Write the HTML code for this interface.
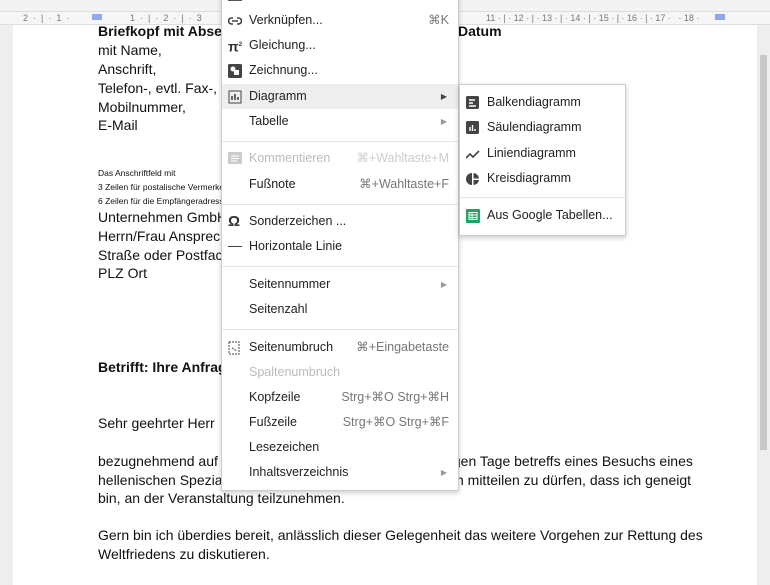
<!DOCTYPE html>
<html><head><meta charset="utf-8"><style>
*{margin:0;padding:0;box-sizing:border-box}
body{width:770px;height:578px;overflow:hidden;background:#eeeeee;font-family:"Liberation Sans",sans-serif;position:relative}
.a{position:absolute;white-space:nowrap}
.page{position:absolute;left:13px;top:25px;width:744px;height:560px;background:#fff}
.ruler{position:absolute;left:0;top:12px;width:770px;height:13px;background:#f6f6f6;border-bottom:1px solid #ddd;font-size:9px;color:#777}
.d{font-size:14px;color:#111;line-height:19px}
.s{font-size:8.5px;color:#111}
.menu{position:absolute;left:221px;top:-8px;width:238px;height:499px;background:#fff;border:1px solid #ccc;box-shadow:0 2px 5px rgba(0,0,0,.2)}
.mi{position:absolute;left:0;width:236px;height:25px;font-size:12.5px;color:#222;line-height:25px;white-space:nowrap}
.mi .t{position:absolute;left:27px;top:0px}
.mi .k{position:absolute;right:9px;top:0px;color:#777}
.mi .ar{position:absolute;right:11px;font-size:8px;color:#999}
.dis{color:#bbb!important}
.dis .k{color:#ccc}
.sep{position:absolute;left:0;width:236px;height:1px;background:#e5e5e5}
.ic{position:absolute;left:6px;top:6px;width:14px;height:14px}
.sub{position:absolute;left:459px;top:84px;width:167px;height:152px;background:#fff;border:1px solid #ccc;box-shadow:0 2px 5px rgba(0,0,0,.2)}
.si{position:absolute;left:0;width:165px;height:25px;line-height:25px;font-size:12.5px;color:#222;white-space:nowrap}
.si .t{position:absolute;left:27px;top:0px}
</style></head><body>
<div style="position:absolute;left:0;top:0;width:770px;height:12px;background:#f3f3f3;border-bottom:1px solid #ddd"></div>
<div class="ruler">
<span class="a" style="left:23px;top:1px">2 &nbsp;·&nbsp; | &nbsp;·&nbsp; 1 &nbsp;·</span>
<div class="a" style="left:92px;top:2px;width:10px;height:6px;background:#8fa8f0"></div>
<span class="a" style="left:130px;top:1px">1 &nbsp;·&nbsp; | &nbsp;·&nbsp; 2 &nbsp;·&nbsp; | &nbsp;·&nbsp; 3</span>
<span class="a" style="left:486px;top:1px">11 · | · 12 · | · 13 · | · 14 · | · 15 · | · 16 · | · 17 · &nbsp; · 18 ·</span>
<div class="a" style="left:715px;top:2px;width:10px;height:6px;background:#8fa8f0"></div>
</div>
<div class="page"></div>
<div class="a" style="left:760px;top:55px;width:7px;height:395px;background:#c8c8c8"></div>

<div class="a d" style="left:98px;top:22px;font-weight:bold">Briefkopf mit Absender</div>
<div class="a d" style="left:458px;top:22px;font-weight:bold">Datum</div>
<div class="a d" style="left:98px;top:41px">mit Name,</div>
<div class="a d" style="left:98px;top:60px">Anschrift,</div>
<div class="a d" style="left:98px;top:79px">Telefon-, evtl. Fax-,</div>
<div class="a d" style="left:98px;top:98px">Mobilnummer,</div>
<div class="a d" style="left:98px;top:116px">E-Mail</div>
<div class="a s" style="left:98px;top:168px">Das Anschriftfeld mit</div>
<div class="a s" style="left:98px;top:182px">3 Zeilen für postalische Vermerke</div>
<div class="a s" style="left:98px;top:196px">6 Zeilen für die Empfängeradresse</div>
<div class="a d" style="left:98px;top:208px">Unternehmen GmbH</div>
<div class="a d" style="left:98px;top:227px">Herrn/Frau Ansprechpartner</div>
<div class="a d" style="left:98px;top:246px">Straße oder Postfach</div>
<div class="a d" style="left:98px;top:264px">PLZ Ort</div>
<div class="a d" style="left:98px;top:358px;font-weight:bold">Betrifft: Ihre Anfrage</div>
<div class="a d" style="left:98px;top:414px">Sehr geehrter Herr</div>
<div class="a d" style="left:98px;top:452px">bezugnehmend auf Ihre freundliche Einladung vom gestrigen Tage betreffs eines Besuchs eines</div>
<div class="a d" style="left:98px;top:471px">hellenischen Spezialitätenrestaurants freue ich mich, Ihnen mitteilen zu dürfen, dass ich geneigt</div>
<div class="a d" style="left:98px;top:489px">bin, an der Veranstaltung teilzunehmen.</div>
<div class="a d" style="left:98px;top:526px">Gern bin ich überdies bereit, anlässlich dieser Gelegenheit das weitere Vorgehen zur Rettung des</div>
<div class="a d" style="left:98px;top:545px">Weltfriedens zu diskutieren.</div>

<div class="menu">
<div class="ic" style="top:2px;left:6px;border:1.5px solid #555;height:6px"></div>
<div class="mi" style="top:15px"><svg class="ic" viewBox="0 0 14 14"><path d="M5 4H3.5a3 3 0 0 0 0 6H5M9 4h1.5a3 3 0 0 1 0 6H9M4 7h6" stroke="#444" stroke-width="1.6" fill="none"/></svg><span class="t">Verknüpfen...</span><span class="k">⌘K</span></div>
<div class="mi" style="top:40px"><span class="ic" style="font-size:14px;line-height:14px;top:5px;font-weight:bold;color:#333">π<sup style="font-size:6px">2</sup></span><span class="t">Gleichung...</span></div>
<div class="mi" style="top:65px"><svg class="ic" viewBox="0 0 14 14"><rect x="0" y="0" width="14" height="14" rx="1.5" fill="#444"/><rect x="6" y="6" width="5" height="5" fill="#fff"/><circle cx="5" cy="5" r="2.5" fill="#fff"/></svg><span class="t">Zeichnung...</span></div>
<div class="mi" style="top:91px;background:#eee"><svg class="ic" viewBox="0 0 14 14"><rect x="1" y="1" width="12" height="12" stroke="#444" fill="none"/><path d="M4 10V6M7 10V4M10 10V7" stroke="#444" stroke-width="1.6"/></svg><span class="t">Diagramm</span><span class="ar" style="color:#444">▶</span></div>
<div class="mi" style="top:116px"><span class="t">Tabelle</span><span class="ar">▶</span></div>
<div class="sep" style="top:148px"></div>
<div class="mi dis" style="top:153px"><svg class="ic" viewBox="0 0 14 14"><rect width="14" height="12" fill="#ccc"/><path d="M3 4h8M3 6.5h8M3 9h6" stroke="#fff"/></svg><span class="t">Kommentieren</span><span class="k">⌘+Wahltaste+M</span></div>
<div class="mi" style="top:179px"><span class="t">Fußnote</span><span class="k">⌘+Wahltaste+F</span></div>
<div class="sep" style="top:211px"></div>
<div class="mi" style="top:216px"><span class="ic" style="font-size:15px;line-height:14px;font-weight:bold;color:#333">Ω</span><span class="t">Sonderzeichen ...</span></div>
<div class="mi" style="top:241px"><div class="ic" style="top:12px;height:1px;background:#444"></div><span class="t">Horizontale Linie</span></div>
<div class="sep" style="top:273px"></div>
<div class="mi" style="top:279px"><span class="t">Seitennummer</span><span class="ar">▶</span></div>
<div class="mi" style="top:304px"><span class="t">Seitenzahl</span></div>
<div class="sep" style="top:336px"></div>
<div class="mi" style="top:342px"><svg class="ic" viewBox="0 0 14 14"><path d="M1 1h10v12H1zM4 7l5 3" stroke="#444" fill="none" stroke-dasharray="2 1"/></svg><span class="t">Seitenumbruch</span><span class="k">⌘+Eingabetaste</span></div>
<div class="mi dis" style="top:367px"><span class="t">Spaltenumbruch</span></div>
<div class="mi" style="top:392px"><span class="t">Kopfzeile</span><span class="k">Strg+⌘O Strg+⌘H</span></div>
<div class="mi" style="top:417px"><span class="t">Fußzeile</span><span class="k">Strg+⌘O Strg+⌘F</span></div>
<div class="mi" style="top:442px"><span class="t">Lesezeichen</span></div>
<div class="mi" style="top:467px"><span class="t">Inhaltsverzeichnis</span><span class="ar">▶</span></div>
</div>

<div class="sub">
<div class="si" style="top:5px"><svg class="ic" viewBox="0 0 14 14"><rect width="13" height="13" rx="1.5" fill="#444"/><path d="M3 4h6M3 7h4M3 10h7" stroke="#fff" stroke-width="1.4"/></svg><span class="t">Balkendiagramm</span></div>
<div class="si" style="top:30px"><svg class="ic" viewBox="0 0 14 14"><rect width="13" height="13" rx="1.5" fill="#444"/><path d="M4 10V6M6.5 10V4M9 10V8" stroke="#fff" stroke-width="1.4"/></svg><span class="t">Säulendiagramm</span></div>
<div class="si" style="top:56px"><svg class="ic" viewBox="0 0 14 14"><path d="M0 11l4-4 3 3 6-6" stroke="#444" stroke-width="1.6" fill="none"/></svg><span class="t">Liniendiagramm</span></div>
<div class="si" style="top:81px"><svg class="ic" viewBox="0 0 14 14"><path d="M6 1a6 6 0 0 0 0 12zM7.5 1a6 6 0 0 1 5.5 5.5H7.5zM7.5 8H13a6 6 0 0 1-5.5 5z" fill="#444"/></svg><span class="t">Kreisdiagramm</span></div>
<div class="a" style="left:0;top:112px;width:165px;height:1px;background:#e5e5e5"></div>
<div class="si" style="top:118px"><svg class="ic" viewBox="0 0 14 14"><rect width="14" height="14" rx="1" fill="#1fa463"/><path d="M3 3.5h8v7H3zM3 6h8M3 8.5h8M6 3.5v7" stroke="#fff" fill="none"/></svg><span class="t">Aus Google Tabellen...</span></div>
</div>
</body></html>
